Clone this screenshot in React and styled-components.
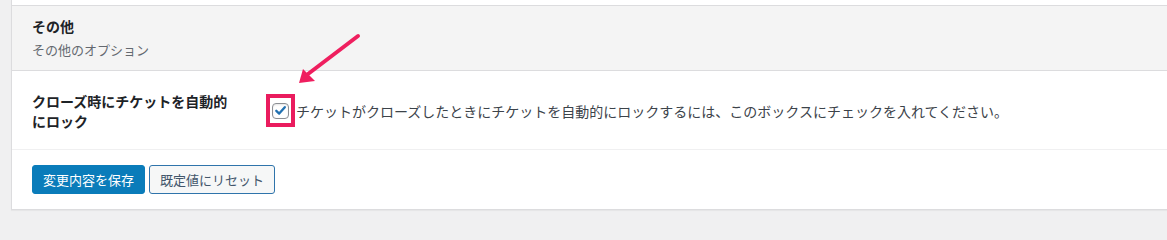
import React from "react";
import styled, { createGlobalStyle } from "styled-components";

const GlobalStyle = createGlobalStyle`
  html, body {
    margin: 0;
    padding: 0;
    background: #f0f0f1;
    overflow: hidden;
  }
  body {
    font-family: "Noto Sans CJK JP", "Noto Sans", sans-serif;
    color: #3c434a;
    font-size: 14px;
  }
`;

const Page = styled.div`
  padding-left: 11px;
  height: 220px;
`;

const Card = styled.div`
  position: relative;
  width: calc(100% + 20px);
  background: #fff;
  border-left: 1px solid #dcdcde;
  border-bottom: 1px solid #dcdcde;
  box-shadow: 0 1px 1px rgba(0, 0, 0, 0.04);
`;

const TopStrip = styled.div`
  height: 5px;
  border-bottom: 1px solid #dcdcde;
`;

const SectionHeader = styled.div`
  background: #f4f4f4;
  padding: 10px 20px;
  border-bottom: 1px solid #dcdcde;
`;

const Title = styled.h2`
  margin: 0;
  font-size: 14px;
  line-height: 20px;
  font-weight: 700;
  color: #1d2327;
`;

const Subtitle = styled.p`
  margin: 4px 0 0;
  font-size: 13px;
  line-height: 20px;
  color: #646970;
`;

const Row = styled.div`
  display: flex;
  align-items: center;
  padding: 20px 20px 18px;
  border-bottom: 1px solid #f0f0f1;
`;

const Label = styled.label`
  width: 200px;
  flex: none;
  font-size: 14px;
  line-height: 20px;
  font-weight: 700;
  color: #1d2327;
`;

const Field = styled.div`
  display: flex;
  align-items: center;
  margin-left: 34px;
  margin-top: -1px;
`;

const Highlight = styled.span`
  display: inline-flex;
  align-items: center;
  justify-content: center;
  width: 21px;
  height: 25px;
  border: 4px solid #ea1c5e;
  margin-right: 1px;
`;

const Box = styled.span`
  display: inline-flex;
  align-items: center;
  justify-content: center;
  width: 15px;
  height: 14px;
  border: 1px solid #8c8f94;
  border-radius: 4px;
  background: #fff;
  box-shadow: inset 0 1px 2px rgba(0, 0, 0, 0.1);
`;

const Description = styled.span`
  font-size: 14px;
  line-height: 20px;
  color: #3c434a;
`;

const Footer = styled.div`
  display: flex;
  gap: 4px;
  padding: 15px 20px 15px;
`;

const Button = styled.button`
  font-family: inherit;
  font-size: 13px;
  line-height: 27px;
  height: 29px;
  padding: 0 10px;
  border-radius: 3px;
  cursor: pointer;
  border: 1px solid ${(p) => (p.$primary ? "#0a7cba" : "#2f74ab")};
  background: ${(p) => (p.$primary ? "#0a7cba" : "#f6f7f7")};
  color: ${(p) => (p.$primary ? "#fff" : "#42566b")};
`;

// annotation arrow pointing at the checkbox
const Arrow = styled.svg`
  position: absolute;
  left: 278px;
  top: 28px;
  pointer-events: none;
`;

function App() {
  return (
    <>
      <GlobalStyle />
      <Page>
        <Card>
          <TopStrip />
          <SectionHeader>
            <Title>その他</Title>
            <Subtitle>その他のオプション</Subtitle>
          </SectionHeader>
          <Row>
            <Label htmlFor="auto-lock">クローズ時にチケットを自動的にロック</Label>
            <Field>
              <Highlight>
                <Box id="auto-lock" role="checkbox" aria-checked="true">
                  <svg width="13" height="13" viewBox="0 0 13 13">
                    <path
                      d="M2.3 6.8 L5.2 9.6 L10.8 3.2"
                      fill="none"
                      stroke="#2271b1"
                      strokeWidth="2.3"
                      strokeLinecap="round"
                      strokeLinejoin="round"
                    />
                  </svg>
                </Box>
              </Highlight>
              <Description>
                チケットがクローズしたときにチケットを自動的にロックするには、このボックスにチェックを入れてください。
              </Description>
            </Field>
          </Row>
          <Footer>
            <Button $primary>変更内容を保存</Button>
            <Button>既定値にリセット</Button>
          </Footer>
          <Arrow width="80" height="60" viewBox="0 0 80 60">
            <line x1="68" y1="8" x2="18" y2="46" stroke="#ef1f5f" strokeWidth="4" strokeLinecap="round" />
            <polygon points="9,55 13,41 25,53" fill="#ef1f5f" />
          </Arrow>
        </Card>
      </Page>
    </>
  );
}

export default App;
